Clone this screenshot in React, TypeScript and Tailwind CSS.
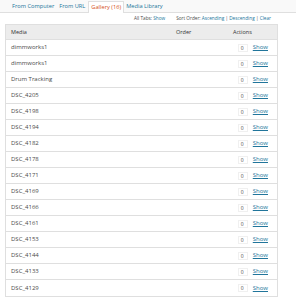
import React from "react";

const rows = [
  "dimmworks1",
  "dimmworks1",
  "Drum Tracking",
  "DSC_4205",
  "DSC_4198",
  "DSC_4194",
  "DSC_4182",
  "DSC_4178",
  "DSC_4171",
  "DSC_4169",
  "DSC_4166",
  "DSC_4161",
  "DSC_4153",
  "DSC_4144",
  "DSC_4133",
  "DSC_4129",
];

export default function App() {
  return (
    <div
      className="w-[296px] h-[300px] overflow-hidden bg-white text-[#4a4a4a] text-[6px]"
      style={{ fontFamily: '"Open Sans", "DejaVu Sans", sans-serif' }}
    >
      <div className="flex items-end h-[13px] pl-[10px] border-b border-[#dfdfdf] bg-[#f9f9f9] text-[5.7px]">
        <span className="px-[2px] h-[11px] leading-[11px] text-[#21759b]">From Computer</span>
        <span className="px-[2px] h-[11px] leading-[11px] text-[#21759b] ml-[1px]">From URL</span>
        <span className="px-[2px] h-[12px] leading-[11px] text-[#d54e21] ml-[1px] bg-white border border-b-0 border-[#dfdfdf] -mb-px">Gallery (16)</span>
        <span className="px-[2px] h-[11px] leading-[11px] text-[#21759b]">Media Library</span>
      </div>
      <div className="flex justify-end h-[11px] items-center pr-[25px] text-[4.7px]">
        <span>All Tabs: <a className="text-[#21759b]">Show</a></span>
        <span className="ml-[11px]">
          Sort Order: <a className="text-[#21759b]">Ascending</a> | <a className="text-[#21759b]">Descending</a> | <a className="text-[#21759b]">Clear</a>
        </span>
      </div>
      <div className="ml-[5px] w-[273px] border border-[#dfdfdf]">
        <div className="flex h-[15px] items-center bg-[#ececec] text-[5.5px] text-[#333] font-medium border-b border-[#dfdfdf]">
          <div className="flex-1 pl-[5px]">Media</div>
          <div className="w-[57px]">Order</div>
          <div className="w-[44px]">Actions</div>
        </div>
        {rows.map((r, i) => (
          <div key={i} className="flex h-[16px] items-center border-b border-[#dfdfdf] last:border-b-0">
            <div className="flex-1 pl-[5px]">{r}</div>
            <div className="flex items-center pr-[9px]">
              <span className="w-[10px] h-[8px] border border-[#f0f0f0] bg-white text-[5px] leading-[6px] pl-[2px]">0</span>
              <a className="ml-[5px] text-[#21759b] underline">Show</a>
            </div>
          </div>
        ))}
      </div>
    </div>
  );
}
